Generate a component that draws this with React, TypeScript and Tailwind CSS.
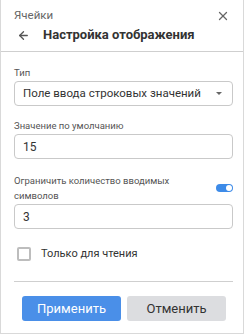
import { ArrowLeft, X } from "lucide-react";

function Field({ value }: { value: string }) {
  return (
    <div className="h-[25px] rounded-[4px] border border-[#c9c9c9] bg-white px-[8px] flex items-center text-[12px] text-[#333]">
      {value}
    </div>
  );
}

export default function App() {
  return (
    <div className="w-[244px] h-[334px] border border-t-0 border-[#d9d9d9] bg-white flex flex-col font-['Roboto',sans-serif] text-[#333]">
      {/* Header */}
      <div className="pl-[13px] pr-[10px] pt-[9px]">
        <div className="flex items-center justify-between h-[14px]">
          <span className="text-[11.5px] text-[#666]">Ячейки</span>
          <X className="w-[14px] h-[14px] text-[#666] mr-[3px]" strokeWidth={2.2} />
        </div>
        <div className="flex items-center h-[20px] mt-[2px]">
          <ArrowLeft className="w-[13px] h-[13px] text-[#555] ml-[3px]" strokeWidth={2.4} />
          <span className="ml-[13px] text-[13px] font-bold text-[#333]">Настройка отображения</span>
        </div>
      </div>
      <div className="mt-[6px] h-px bg-[#cfcfcf]" />

      {/* Body */}
      <div className="pl-[13px] pr-[10px] pt-[13px] flex flex-col">
        <label className="text-[9.5px] leading-[16px] text-[#555]">Тип</label>
        <div className="h-[25px] rounded-[4px] border border-[#c9c9c9] bg-white pl-[8px] pr-[10px] flex items-center justify-between text-[11.5px] whitespace-nowrap">
          <span>Поле ввода строковых значений</span>
          <span className="w-0 h-0 border-l-[3px] border-r-[3px] border-t-[3px] border-l-transparent border-r-transparent border-t-[#666]" />
        </div>

        <label className="mt-[12px] text-[9.5px] leading-[16px] text-[#555]">Значение по умолчанию</label>
        <Field value="15" />

        <div className="mt-[14px] flex items-center justify-between">
          <span className="text-[9.5px] leading-[15px] text-[#555] w-[170px]">
            Ограничить количество вводимых символов
          </span>
          <div className="w-[17px] h-[8px] rounded-full bg-[#3d8be8] flex items-center justify-end pr-[1px]">
            <div className="w-[6px] h-[6px] rounded-full bg-white" />
          </div>
        </div>
        <div className="mt-[1px]">
          <Field value="3" />
        </div>

        <div className="mt-[18px] flex items-center h-[14px]">
          <div className="ml-[3px] w-[14px] h-[14px] rounded-[2px] border-2 border-[#bdbdbd] bg-white" />
          <span className="ml-[10px] text-[11px]">Только для чтения</span>
        </div>

        <div className="mt-[20px] h-px bg-[#cfcfcf]" />

        <div className="mt-[14px] pl-[8px] flex gap-[6px]">
          <button className="w-[99px] h-[25px] rounded-[3px] bg-[#4a8fe8] text-white text-[13px]">Применить</button>
          <button className="w-[99px] h-[25px] rounded-[3px] bg-[#dcdde0] text-[#333] text-[13px]">Отменить</button>
        </div>
      </div>
    </div>
  );
}
